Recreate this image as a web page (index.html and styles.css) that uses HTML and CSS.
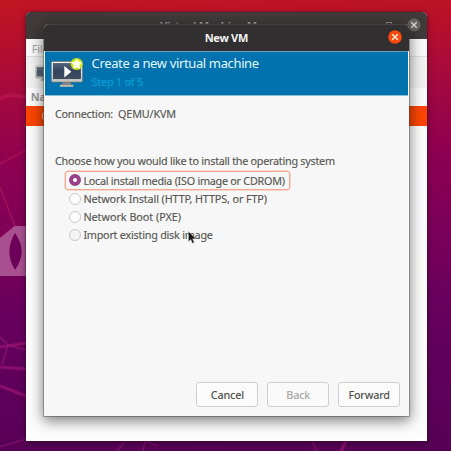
FILE: index.html
```
<!DOCTYPE html>
<html lang="en">
<head>
<meta charset="utf-8">
<title>New VM</title>
<link rel="stylesheet" href="styles.css">
</head>
<body>
<div class="desktop">
  <svg class="wallpaper" viewBox="0 0 451 451" aria-hidden="true">
    <g fill="none" stroke="#d02460" stroke-opacity=".5">
      <path d="M0 98L10 95L26 97" stroke-width="4" stroke-opacity=".35"/>
      <path d="M0 164L26 150M0 187L15 226M0 238L15 226" stroke-width="1.3"/>
    </g>
    <path d="M0 238L15 226H26V276H0Z" fill="#a8508f"/>
    <path d="M15 233C24 246 24 257 15 270C7 257 8 245 15 233Z" fill="#6d0058"/>
    <g fill="none" stroke="#a31575" stroke-opacity=".65">
      <path d="M0 347L26 343M0 367L26 369M0 386L26 396" stroke-width="3"/>
      <path d="M0 337L8 345L2 365M8 345L26 350M0 447L26 439M117 451L125 441M143 451L145 441L158 446M312 441L317 451" stroke-width="1.3"/>
      <path d="M346 441L341 451" stroke-width="3"/>
    </g>
  </svg>

  <section class="manager">
    <header class="manager-title">
      <span class="manager-name">Virtual Machine Manager</span>
      <svg class="manager-controls" viewBox="0 0 46 16">
        <rect x="5.500" y="5.500" width="5" height="5" fill="none" stroke="#8d8a88"/>
        <circle cx="33" cy="8" r="6.500" fill="#686665"/>
        <path d="M30.300 5.300l5.400 5.400m0-5.400l-5.400 5.400" stroke="#e2e0de" stroke-width="1.300"/>
      </svg>
    </header>
    <nav class="menubar">File</nav>
    <div class="toolbar">
      <svg class="tool-icon" viewBox="0 0 34 30"><use href="#monitor"/></svg>
    </div>
    <div class="list-head">Name</div>
    <div class="list-row">QEMU/KVM</div>
  </section>

  <section class="dialog">
    <header class="dialog-title">
      <span>New VM</span>
      <svg class="close" viewBox="0 0 14 14">
        <circle cx="7" cy="7" r="6.800" fill="#f94a0b"/>
        <path d="M4.200 4.200l5.600 5.600m0-5.600l-5.600 5.600" stroke="#fff0e8" stroke-width="1.400"/>
      </svg>
    </header>
    <div class="banner">
      <svg class="banner-icon" viewBox="0 0 34 30">
        <defs>
          <linearGradient id="screen" x2="0" y2="1"><stop stop-color="#53617a"/><stop offset=".5" stop-color="#33435c"/><stop offset="1" stop-color="#3f4e66"/></linearGradient>
          <linearGradient id="frame" x2="0" y2="1"><stop stop-color="#f7f7f6"/><stop offset="1" stop-color="#c2c3c0"/></linearGradient>
          <radialGradient id="glow"><stop offset=".6" stop-color="#e3f01c"/><stop offset=".82" stop-color="#c4df17" stop-opacity=".9"/><stop offset="1" stop-color="#a6d020" stop-opacity="0"/></radialGradient>
          <g id="monitor">
            <path d="M12.500 24h8l.6 2.600h2.300v2.100H9.800v-2.100h2.300z" fill="#858780"/>
            <rect x="9.800" y="27" width="13.600" height="1.700" rx=".6" fill="#b9bab6"/>
            <rect x="1.300" y="3.500" width="31.200" height="20.600" rx="1.300" fill="url(#frame)" stroke="#72746f" stroke-width=".7"/>
            <rect x="3.200" y="5.500" width="27.400" height="15.300" fill="url(#screen)" stroke="#202d42" stroke-width=".5"/>
            <path d="M14.300 8v11.500l7-5.750z" fill="#fff"/>
            <circle cx="26.700" cy="6" r="6.700" fill="url(#glow)"/>
            <path d="M26.700.9l1.500 3.100 3.500.5-2.500 2.500.6 3.500-3.100-1.600-3.100 1.600.6-3.500-2.500-2.500 3.500-.5z" fill="#fffff0" stroke="#fffff0" stroke-width=".6"/>
          </g>
        </defs>
        <use href="#monitor"/>
      </svg>
      <div class="banner-text">
        <h1>Create a new virtual machine</h1>
        <p>Step 1 of 5</p>
      </div>
    </div>
    <div class="content">
      <p class="connection"><span class="connection-key">Connection:</span><span class="connection-value">QEMU/KVM</span></p>
      <p class="question">Choose how you would like to install the operating system</p>
      <div class="options">
        <div class="option focused"><i class="radio checked"></i><span class="local">Local install media (ISO image or CDROM)</span></div>
        <div class="option"><i class="radio"></i><span class="network">Network Install (HTTP, HTTPS, or FTP)</span></div>
        <div class="option"><i class="radio"></i><span class="boot">Network Boot (PXE)</span></div>
        <div class="option"><i class="radio hovered"></i><span class="import">Import existing disk image</span></div>
      </div>
    </div>
    <footer class="actions">
      <button>Cancel</button>
      <button disabled>Back</button>
      <button>Forward</button>
    </footer>
  </section>

  <svg class="pointer" viewBox="0 0 8 13"><path d="M.5.500v10l2.300-2.100 1.700 3.800 1.700-.8-1.600-3.600h3z" fill="#171717" stroke="#c5c5c5" stroke-width=".4"/></svg>
</div>
</body>
</html>
```

FILE: styles.css
```
* { box-sizing: border-box; }
body { margin: 0; font-family: "Noto Sans", "Open Sans", sans-serif; font-size: 10.8px; color: #575752; }
h1, p { margin: 0; font-weight: 400; }
svg { display: block; }

.desktop {
  position: relative;
  width: 451px;
  height: 451px;
  overflow: hidden;
  padding: 12px 24px 10.5px 25.700px;
  background: linear-gradient(178deg, #c01622 0, #b9102a 7%, #a60a3c 19%, #8e0050 35%, #7b0059 52%, #65005d 70%, #560055 100%);
}
.wallpaper { position: absolute; inset: 0; width: 451px; height: 451px; }

.manager {
  position: relative;
  height: 428.5px;
  overflow: hidden;
  border-radius: 5px 5px 0 0;
  background: #fdfdfd;
  box-shadow: 0 0 0 .5px rgba(60, 20, 50, .5), 0 2px 6px rgba(20, 0, 20, .5);
}
.manager-title { display: flex; justify-content: flex-end; height: 27px; background: #403b3a; }
.manager-name { flex: 1; padding-left: 48px; text-align: center; color: #aaa7a4; font-weight: 700; font-size: 11px; line-height: 28px; letter-spacing: -.2px; }
.manager-controls { width: 46px; height: 16px; margin-top: 5px; }
.menubar { height: 18px; padding-left: 6px; border-bottom: 1px solid #dedede; background: #f9f9f9; color: #a1a1a1; line-height: 19px; }
.toolbar { height: 31px; padding: 7px 9px; background: #f2f2f2; }
.tool-icon { width: 20px; height: 17.6px; opacity: .85; }
.list-head { height: 18px; padding-left: 5px; background: #fcfcfc; color: #999; font-weight: 700; line-height: 18px; }
.list-row { height: 20px; padding-left: 15.5px; background: #fb4500; color: #ffb795; line-height: 19px; }

.dialog {
  position: absolute;
  left: 44px;
  top: 24px;
  width: 364.7px;
  height: 391.5px;
  display: flex;
  flex-direction: column;
  border-radius: 5px 5px 0 0;
  background: #f7f7f7;
  box-shadow: 0 0 0 .7px rgba(60, 60, 60, .55), 0 4px 14px 1px rgba(0, 0, 0, .5);
}
.dialog-title {
  position: relative;
  height: 27px;
  border-radius: 5px 5px 0 0;
  border-top: 1px solid #454140;
  background: #312f2f;
  color: #f4f4f2;
  text-align: center;
  font-weight: 700;
  font-size: 11px;
  line-height: 25px;
  letter-spacing: -.3px;
}
.close { position: absolute; right: 6.5px; top: 5px; width: 14px; height: 14px; }
.banner { display: flex; height: 45px; margin: 0 1px; padding: 6px 0 0 5px; border-top: 1px solid #669dbc; border-bottom: 1px solid #8bbcd8; background: #0073ae; }
.banner-icon { width: 34px; height: 30px; }
.banner-text { padding-left: 7.6px; margin-top: -5px; white-space: nowrap; }
.banner h1 { color: #e5f6ff; font-size: 13px; line-height: 20px; letter-spacing: -.36px; }
.banner p { color: #00a1dc; line-height: 17px; letter-spacing: -.2px; -webkit-text-stroke: .15px #00a1dc; }

.content { flex: 1; padding: 9px 11px; white-space: nowrap; -webkit-text-stroke: .15px #575752; }
.connection { display: flex; gap: 5px; height: 18px; line-height: 18px; }
.connection-key { letter-spacing: -.25px; }
.connection-value { letter-spacing: -.15px; }
.question { height: 18px; margin-top: 29px; line-height: 18px; letter-spacing: -.26px; }
.options { padding-left: 9.500px; }
.option { display: flex; align-items: center; gap: 2.7px; width: 225px; height: 18.3px; padding-left: 3.2px; border: 1px solid transparent; }
.option.focused { height: 19px; margin-top: .5px; margin-bottom: -.4px; border-color: #f9a68f; border-radius: 3px; box-shadow: 0 0 0 .5px #f9b7a5; }
.local { letter-spacing: -.26px; }
.network { letter-spacing: -.12px; }
.boot { letter-spacing: -.03px; }
.import { letter-spacing: -.23px; }
.radio { flex: none; position: relative; top: .4px; width: 12px; height: 12px; border: 1px solid #c9c9c9; border-radius: 50%; background: #fff; }
.radio.checked { border: 4px solid #974189; }
.radio.hovered { background: #f4f4f4; }

.actions { display: flex; gap: 8.700px; justify-content: flex-end; padding: 0 8.500px 8.500px 0; }
button { width: 62.2px; height: 25px; padding: 0; border: 1px solid #cfcfcf; border-radius: 3px; background: #fcfcfc; color: #50504c; font: 500 10.8px/22px "Noto Sans", sans-serif; letter-spacing: -.2px; }
button:disabled { color: #a8a8a5; background: #fafafa; }
.pointer { position: absolute; left: 188px; top: 231px; width: 8px; height: 13px; }
```
